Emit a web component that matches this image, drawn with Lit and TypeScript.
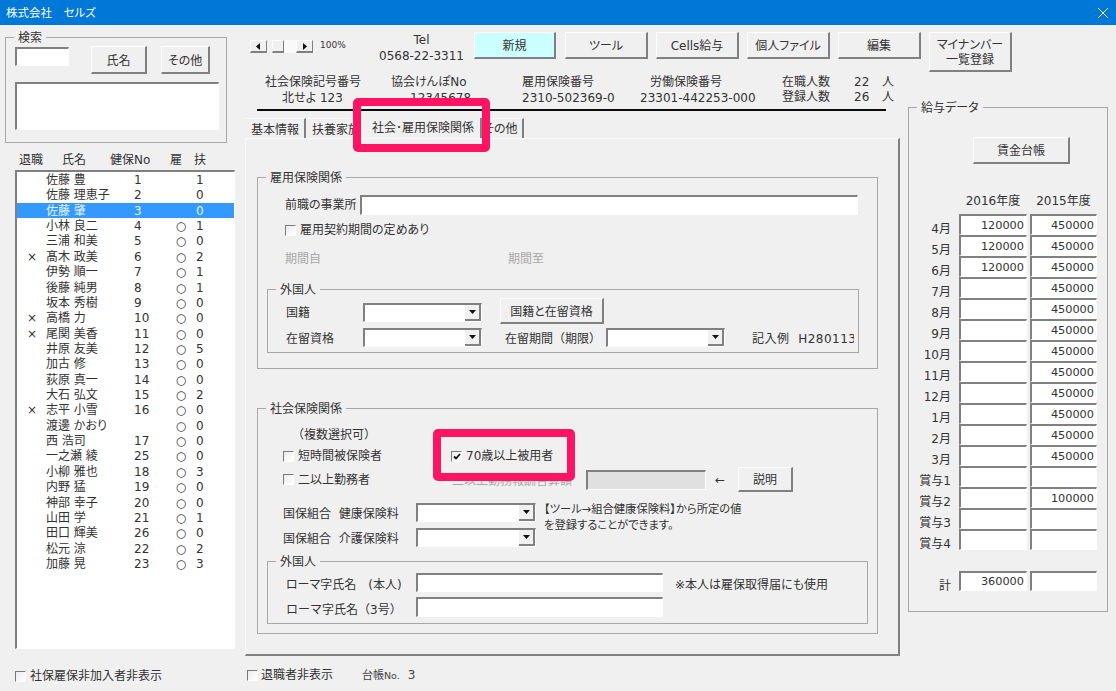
import { LitElement, html, css, svg } from "lit";
import { customElement } from "lit/decorators.js";

const staff: [string, string, string, string, string][] = [
  ["", "佐藤 豊", "1", "", "1"],
  ["", "佐藤 理恵子", "2", "", "0"],
  ["", "佐藤 肇", "3", "", "0"],
  ["", "小林 良二", "4", "○", "1"],
  ["", "三浦 和美", "5", "○", "0"],
  ["×", "髙木 政美", "6", "○", "2"],
  ["", "伊勢 順一", "7", "○", "1"],
  ["", "後藤 純男", "8", "○", "1"],
  ["", "坂本 秀樹", "9", "○", "0"],
  ["×", "高橋 力", "10", "○", "0"],
  ["×", "尾関 美香", "11", "○", "0"],
  ["", "井原 友美", "12", "○", "5"],
  ["", "加古 修", "13", "○", "0"],
  ["", "荻原 真一", "14", "○", "0"],
  ["", "大石 弘文", "15", "○", "2"],
  ["×", "志平 小雪", "16", "○", "0"],
  ["", "渡邊 かおり", "", "○", "0"],
  ["", "西 浩司", "17", "○", "0"],
  ["", "一之瀬 綾", "25", "○", "0"],
  ["", "小柳 雅也", "18", "○", "3"],
  ["", "内野 猛", "19", "○", "0"],
  ["", "神部 幸子", "20", "○", "0"],
  ["", "山田 学", "21", "○", "1"],
  ["", "田口 輝美", "26", "○", "0"],
  ["", "松元 涼", "22", "○", "2"],
  ["", "加藤 晃", "23", "○", "3"],
];

const pay: [string, string, string][] = [
  ["4月", "120000", "450000"],
  ["5月", "120000", "450000"],
  ["6月", "120000", "450000"],
  ["7月", "", "450000"],
  ["8月", "", "450000"],
  ["9月", "", "450000"],
  ["10月", "", "450000"],
  ["11月", "", "450000"],
  ["12月", "", "450000"],
  ["1月", "", "450000"],
  ["2月", "", "450000"],
  ["3月", "", "450000"],
  ["賞与1", "", ""],
  ["賞与2", "", "100000"],
  ["賞与3", "", ""],
  ["賞与4", "", ""],
];

const tri = (d: string) =>
  html`<svg width="5" height="7" viewBox="0 0 5 7">${svg`<path d=${d} fill="#111" />`}</svg>`;

@customElement("app-root")
export class AppRoot extends LitElement {
  static styles = css`
    :host {
      display: block;
      width: 1116px;
      height: 691px;
      overflow: hidden;
      position: relative;
      background: #f0f0f0;
      color: #333;
      font: 12px/16px "DejaVu Sans", "Noto Sans CJK JP", sans-serif;
      font-feature-settings: "palt";
      white-space: nowrap;
    }
    * { box-sizing: border-box; }

    .title {
      height: 25px;
      background: #0078d7;
      color: #fff;
      font-size: 11.5px;
      display: flex;
      align-items: center;
      justify-content: space-between;
      padding: 0 8px 0 6px;
    }
    .main { display: flex; }
    .left { width: 245px; flex: none; padding: 4px 0 0 5px; }
    .right {
      display: grid;
      grid-template-columns: 663px 200px;
      grid-template-rows: 47px auto;
    }

    fieldset {
      margin: 0;
      padding: 0;
      min-width: 0;
      border: 1px solid #a8a8a8;
    }
    legend { margin-left: 8px; padding: 0 4px; height: 16px; line-height: 18px; }

    button {
      font: inherit;
      color: inherit;
      font-feature-settings: inherit;
      background: #f0f0f0;
      padding: 2px 0 0;
      border-style: solid;
      border-width: 1px 2px 2px 1px;
      border-color: #fff #808080 #808080 #fff;
      flex: none;
    }
    input {
      font: 11.3px/14px "DejaVu Sans", "Noto Sans CJK JP", sans-serif;
      color: #333;
      background: #fff;
      padding: 0 2px;
      margin: 0;
      display: block;
      appearance: none;
      outline: none;
      border-style: solid;
      border-width: 2px 1px 1px 2px;
      border-color: #808080 #fff #fff #808080;
      border-radius: 0;
      flex: none;
    }
    .off { color: #a8a8a8; }
    .wide { font-feature-settings: normal; }

    /* check boxes */
    .chk { display: flex; align-items: center; gap: 4px; height: 16px; }
    .box {
      width: 11px;
      height: 11px;
      flex: none;
      border-style: solid;
      border-width: 1px;
      border-color: #7a7a7a #fff #fff #7a7a7a;
      background: linear-gradient(135deg, #ececec, #fff);
      display: flex;
      align-items: center;
      justify-content: center;
    }

    /* combo boxes */
    .combo {
      width: 119px;
      height: 19px;
      flex: none;
      background: #fff;
      border-style: solid;
      border-width: 2px 1px 1px 2px;
      border-color: #808080 #fff #fff #808080;
      display: flex;
      justify-content: flex-end;
    }
    .drop {
      width: 16px;
      background: #f0f0f0;
      border-right: 2px solid #808080;
      border-bottom: 2px solid #808080;
      display: flex;
      align-items: center;
      justify-content: center;
    }

    /* left column */
    .search { width: 222px; height: 114px; }
    .search-in { padding: 1px 0 0 9px; }
    .search-top { display: flex; align-items: flex-start; }
    .search-top input { width: 54px; height: 19px; margin: 1px 22px 0 0; }
    .search-top button { height: 28px; }
    .b-name { width: 56px; margin-right: 14px; }
    .b-other { width: 49px; }
    .search-box { width: 204px; height: 48px; margin-top: 8px; }

    .cols {
      display: grid;
      grid-template-columns: 43px 48px 60px 24px auto;
      margin: 9px 0 2px 14px;
    }
    .list {
      width: 220px;
      height: 479px;
      margin-left: 10px;
      background: #fff;
      border-style: solid;
      border-width: 2px 1px 1px 2px;
      border-color: #808080 #fff #fff #808080;
    }
    .row {
      display: grid;
      grid-template-columns: 29px 88px 32px 30px auto;
      height: 15.36px;
      line-height: 17px;
    }
    .row.sel { background: #3399ff; color: #e8f3ff; }
    .mark { padding-left: 10px; }
    .maru { text-align: center; }
    .foot-l { margin: 19px 0 0 10px; }

    /* toolbar */
    .bar {
      grid-column: 1 / 3;
      display: flex;
      align-items: flex-start;
      padding: 7px 0 0 5px;
    }
    .scroll { display: flex; margin-top: 8px; height: 13px; }
    .sb {
      width: 17px;
      height: 13px;
      background: #f0f0f0;
      border-right: 1px solid #808080;
      border-bottom: 2px solid #808080;
      border-top: 1px solid #fff;
      border-left: 1px solid #fff;
      display: flex;
      align-items: center;
      justify-content: center;
    }
    .thumb { width: 12px; margin-left: 5px; }
    .track { width: 12px; background: #f9f9f9; }
    .pct { font-size: 9px; margin: 5px 0 0 7px; width: 24px; }
    .tel { width: 85px; margin-left: 35px; text-align: center; }
    .tools { display: flex; gap: 8px; margin-left: 10px; }
    .tools button { width: 83px; height: 27px; }
    .tools .new { width: 82px; margin-right: 1px; background: #ccffff; }
    .tools .two { height: 40px; line-height: 15px; }

    /* company line */
    .info {
      display: grid;
      grid-template-columns: 126px 131px 118px 142px auto;
      padding: 2px 0 0 20px;
    }
    .i1 { width: 95px; text-align: center; }
    .i2v { padding-left: 19px; }
    .i4h { padding-left: 10px; }
    .counts {
      display: grid;
      grid-template-columns: 72px 28px auto;
      grid-template-rows: 15px 15px;
    }
    .rule { height: 2px; width: 629px; margin: 3px 0 7px 12px; background: #0a0a0a; }

    /* tabs */
    .tabs { display: flex; height: 20px; }
    .tab {
      height: 20px;
      padding: 3px 0 0 6px;
      border-right: 2px solid #808080;
      border-top: 1px solid #fafafa;
      flex: none;
    }
    .t1 { width: 61px; }
    .t2 { width: 56px; overflow: hidden; border-right: 0; }
    .t3 { width: 120px; padding: 2px 0 0 10px; border-top: 0; }
    .t4 { width: 42px; padding: 2px 0 0 1px; }
    .page {
      width: 655px;
      height: 518px;
      padding: 30px 0 0 11px;
      border-style: solid;
      border-width: 1px 2px 2px 1px;
      border-color: #fafafa #808080 #808080 #fafafa;
    }
    .g1 { width: 621px; height: 200px; }
    .g2 { width: 621px; height: 234px; margin-top: 31px; }
    .in1 { padding: 10px 0 0 9px; }
    .pad { padding-left: 18px; }
    .prev { display: flex; align-items: center; }
    .prev span { width: 75px; }
    .prev input { width: 498px; height: 20px; }
    .contract { margin-top: 7px; }
    .period { display: flex; margin-top: 13px; }
    .period span { width: 223px; }

    .f1 { width: 592px; height: 72px; margin-top: 14px; }
    .f1-in { padding: 1px 0 0 18px; }
    .f1-a { display: flex; align-items: flex-start; height: 26px; }
    .f1-a > span { width: 77px; margin-top: 7px; }
    .f1-a .combo { margin-top: 5px; }
    .f1-a button { width: 104px; height: 26px; margin-left: 18px; }
    .f1-b { display: flex; align-items: center; height: 19px; margin-top: 4px; }
    .f1-b > span { padding-top: 2px; }
    .f1-b .l1 { width: 77px; }
    .f1-b .l2 { width: 101px; margin-left: 23px; }
    .f1-b .l3 {
      width: 102px;
      margin-left: 27px;
      overflow: hidden;
      letter-spacing: 0.5px;
    }

    .in2 { padding: 11px 0 0 9px; }
    .multi { padding-left: 25px; }
    .line-a { display: flex; margin-top: 5px; padding-left: 16px; }
    .line-a .chk:first-child { width: 168px; }
    .line-b {
      display: flex;
      align-items: center;
      height: 25px;
      margin-top: 3px;
      padding-left: 16px;
    }
    .line-b .chk { width: 169px; }
    .sum { width: 134px; margin-top: 3px; }
    .line-b input { width: 120px; height: 20px; background: #e0e0e0; }
    .arrow { width: 32px; padding-left: 9px; }
    .line-b button { width: 55px; height: 25px; }
    .kumi {
      display: grid;
      grid-template-columns: 133px 120px auto;
      grid-template-rows: 19px 19px;
      row-gap: 6px;
      margin-top: 11px;
      padding-left: 16px;
      align-items: center;
    }
    .kumi > span { padding-top: 2px; }
    .kumi .combo { width: 120px; }
    .note {
      grid-column: 3;
      grid-row: 1 / 3;
      align-self: start;
      padding: 0 0 0 8px;
      margin-top: -1px;
      font-size: 11.3px;
    }
    .f2 { width: 601px; height: 71px; margin-top: 6px; }
    .f2-in { padding: 4px 0 0 18px; }
    .f2-row { display: flex; align-items: center; height: 19px; }
    .f2-row + .f2-row { margin-top: 5px; height: 20px; }
    .f2-row > span { padding-top: 5px; }
    .f2-row > span:first-child { width: 130px; }
    .f2-row input { width: 247px; height: 19px; }
    .f2-row + .f2-row input { height: 20px; }
    .f2-note { margin-left: 12px; }

    .foot { display: flex; margin: 11px 0 0 2px; }
    .foot .chk { width: 115px; gap: 3px; }
    .ledger { font-size: 11px; color: #444; }
    .ledger b { font-weight: normal; font-size: 9.5px; }
    .ledger i { font-style: normal; font-size: 12px; margin-left: 8px; }

    /* pay data */
    .pay { width: 200px; height: 513px; margin-top: 27px; }
    .pay-in { padding: 22px 0 0 0; }
    .ledger-btn { width: 97px; height: 27px; margin-left: 64px; display: block; }
    .pay-grid {
      display: grid;
      grid-template-columns: 47px 68px 67px;
      column-gap: 3px;
      grid-auto-rows: 21px;
      margin-top: 29px;
    }
    .pay-head { text-align: center; }
    .pay-label { text-align: right; padding: 7px 5px 0 0; line-height: 16px; height: 21px; overflow: visible; }
    .pay-grid input { width: 100%; height: 21px; text-align: right; }
    .pay-grid .gap { grid-column: 1 / 4; height: 20px; }
    .pay-grid .total { height: 20px; }

    /* call-outs */
    .mark-box {
      position: absolute;
      border: 8px solid #ff1464;
      border-radius: 5px;
      pointer-events: none;
    }
    .m1 { left: 353px; top: 98px; width: 137px; height: 54px; }
    .m2 { left: 433px; top: 429px; width: 142px; height: 52px; }
  `;

  private box(checked = false) {
    return html`<span class="box">${checked
      ? html`<svg width="8" height="7" viewBox="0 0 8 7"><path d="M1 3.5 3 5.5 7 1" fill="none" stroke="#111" stroke-width="1.8" /></svg>`
      : ""}</span>`;
  }

  private combo() {
    return html`<div class="combo"><span class="drop">
      <svg width="7" height="4" viewBox="0 0 7 4"><path d="M0 0H7L3.5 4Z" fill="#111" /></svg>
    </span></div>`;
  }

  render() {
    return html`
      <div class="title">
        <span>株式会社　セルズ</span>
        <svg width="10" height="10" viewBox="0 0 10 10"><path d="M0 0 10 10M10 0 0 10" stroke="#fff" stroke-width="1" fill="none" /></svg>
      </div>
      <div class="main">
        <div class="left">
          <fieldset class="search">
            <legend>検索</legend>
            <div class="search-in">
              <div class="search-top">
                <input />
                <button class="b-name">氏名</button>
                <button class="b-other">その他</button>
              </div>
              <input class="search-box" />
            </div>
          </fieldset>
          <div class="cols"><span>退職</span><span>氏名</span><span>健保No</span><span>雇</span><span>扶</span></div>
          <div class="list">
            ${staff.map(
              (r, i) => html`<div class="row ${i === 2 ? "sel" : ""}">
                <span class="mark">${r[0]}</span><span>${r[1]}</span><span>${r[2]}</span><span class="maru">${r[3]}</span><span>${r[4]}</span>
              </div>`
            )}
          </div>
          <label class="chk foot-l">${this.box()}<span>社保雇保非加入者非表示</span></label>
        </div>

        <div class="right">
          <div class="bar">
            <div class="scroll">
              <span class="sb">${tri("M4 0V7L0 3.5Z")}</span>
              <span class="sb thumb"></span>
              <span class="track"></span>
              <span class="sb">${tri("M1 0V7L5 3.5Z")}</span>
            </div>
            <span class="pct">100%</span>
            <div class="tel">Tel<br />0568-22-3311</div>
            <div class="tools">
              <button class="new">新規</button>
              <button>ツール</button>
              <button>Cells給与</button>
              <button>個人ファイル</button>
              <button>編集</button>
              <button class="two">マイナンバー<br />一覧登録</button>
            </div>
          </div>

          <div class="center">
            <div class="info">
              <div class="i1">社会保険記号番号<br />北せよ 123</div>
              <div>協会けんぽNo<br /><span class="i2v">12345678</span></div>
              <div>雇用保険番号<br />2310-502369-0</div>
              <div><span class="i4h">労働保険番号</span><br />23301-442253-000</div>
              <div class="counts">
                <span>在職人数</span><span>22</span><span>人</span>
                <span>登録人数</span><span>26</span><span>人</span>
              </div>
            </div>
            <div class="rule"></div>
            <div class="tabs">
              <div class="tab t1">基本情報</div>
              <div class="tab t2">扶養家族</div>
              <div class="tab t3">社会･雇用保険関係</div>
              <div class="tab t4">その他</div>
            </div>
            <div class="page">
              <fieldset class="g1">
                <legend>雇用保険関係</legend>
                <div class="in1">
                  <div class="pad prev"><span>前職の事業所</span><input /></div>
                  <label class="pad chk contract">${this.box()}<span>雇用契約期間の定めあり</span></label>
                  <div class="pad period off"><span>期間自</span><span>期間至</span></div>
                  <fieldset class="f1">
                    <legend>外国人</legend>
                    <div class="f1-in">
                      <div class="f1-a">
                        <span>国籍</span>
                        ${this.combo()}
                        <button>国籍と在留資格</button>
                      </div>
                      <div class="f1-b">
                        <span class="l1">在留資格</span>
                        ${this.combo()}
                        <span class="l2 wide">在留期間（期限）</span>
                        ${this.combo()}
                        <span class="l3">記入例&nbsp;&nbsp;H280113</span>
                      </div>
                    </div>
                  </fieldset>
                </div>
              </fieldset>

              <fieldset class="g2">
                <legend>社会保険関係</legend>
                <div class="in2">
                  <div class="multi wide">（複数選択可）</div>
                  <div class="line-a">
                    <label class="chk">${this.box()}<span>短時間被保険者</span></label>
                    <label class="chk">${this.box(true)}<span>70歳以上被用者</span></label>
                  </div>
                  <div class="line-b">
                    <label class="chk">${this.box()}<span>二以上勤務者</span></label>
                    <span class="sum off">二以上勤務報酬合算額</span>
                    <input disabled />
                    <span class="arrow">←</span>
                    <button>説明</button>
                  </div>
                  <div class="kumi">
                    <span>国保組合&nbsp;&nbsp;健康保険料</span>
                    ${this.combo()}
                    <div class="note">【ツール→組合健康保険料】から所定の値<br />を登録することができます。</div>
                    <span>国保組合&nbsp;&nbsp;介護保険料</span>
                    ${this.combo()}
                  </div>
                  <fieldset class="f2">
                    <legend>外国人</legend>
                    <div class="f2-in">
                      <div class="f2-row">
                        <span>ローマ字氏名　(本人)</span><input />
                        <span class="f2-note">※本人は雇保取得届にも使用</span>
                      </div>
                      <div class="f2-row">
                        <span class="wide">ローマ字氏名（3号）</span><input />
                      </div>
                    </div>
                  </fieldset>
                </div>
              </fieldset>
            </div>
            <div class="foot">
              <label class="chk">${this.box()}<span>退職者非表示</span></label>
              <span class="ledger">台帳<b>No.</b><i>3</i></span>
            </div>
          </div>

          <fieldset class="pay">
            <legend>給与データ</legend>
            <div class="pay-in">
              <button class="ledger-btn">賃金台帳</button>
              <div class="pay-grid">
                <span></span><span class="pay-head">2016年度</span><span class="pay-head">2015年度</span>
                ${pay.map(
                  (p) => html`<span class="pay-label">${p[0]}</span><input .value=${p[1]} /><input .value=${p[2]} />`
                )}
                <span class="gap"></span>
                <span class="pay-label">計</span><input class="total" .value=${"360000"} /><input class="total" />
              </div>
            </div>
          </fieldset>
        </div>
      </div>
      <div class="mark-box m1"></div>
      <div class="mark-box m2"></div>
    `;
  }
}
